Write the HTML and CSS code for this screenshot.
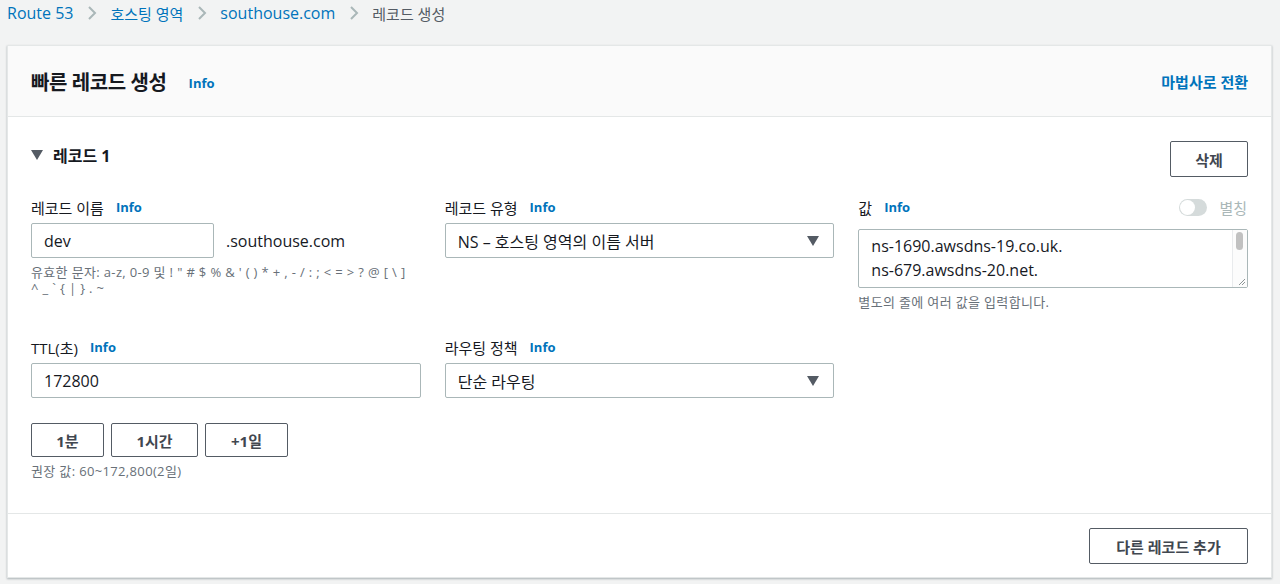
FILE: index.html
```html
<!DOCTYPE html>
<html lang="ko">
<head>
<meta charset="utf-8">
<title>레코드 생성</title>
<link rel="stylesheet" href="styles.css">
</head>
<body>
<nav class="breadcrumbs">
  <a class="crumb-link">Route 53</a>
  <span class="chev"><svg width="10" height="16" viewBox="0 0 10 16"><path d="M2 2 L8 8 L2 14" fill="none" stroke="#aab7b8" stroke-width="2"/></svg></span>
  <a class="crumb-link crumb-ko">호스팅 영역</a>
  <span class="chev"><svg width="10" height="16" viewBox="0 0 10 16"><path d="M2 2 L8 8 L2 14" fill="none" stroke="#aab7b8" stroke-width="2"/></svg></span>
  <a class="crumb-link">southouse.com</a>
  <span class="chev"><svg width="10" height="16" viewBox="0 0 10 16"><path d="M2 2 L8 8 L2 14" fill="none" stroke="#aab7b8" stroke-width="2"/></svg></span>
  <span class="crumb-current crumb-ko">레코드 생성</span>
</nav>

<section class="card">
  <header class="card-header">
    <div class="title-wrap">
      <h1 class="card-title">빠른 레코드 생성</h1>
      <a class="info info-title">Info</a>
    </div>
    <a class="wizard-link">마법사로 전환</a>
  </header>

  <div class="card-body">
    <div class="record-head">
      <div class="expander">
        <svg class="caret" width="12" height="10" viewBox="0 0 12 10"><path d="M0 0 H12 L6 10 Z" fill="#545b64"/></svg>
        <span class="record-title">레코드 1</span>
      </div>
      <button class="btn btn-delete">삭제</button>
    </div>

    <div class="grid">
      <div class="field">
        <div class="label-row"><span class="label">레코드 이름</span><a class="info">Info</a></div>
        <div class="name-row">
          <input class="input input-name" value="dev">
          <span class="suffix">.southouse.com</span>
        </div>
        <p class="hint hint-name">유효한 문자: a-z, 0-9 및 ! " # $ % &amp; ' ( ) * + , - / : ; &lt; = &gt; ? @ [ \ ]<br>^ _ ` { | } . ~</p>
      </div>

      <div class="field">
        <div class="label-row"><span class="label">레코드 유형</span><a class="info">Info</a></div>
        <div class="select">
          <span class="select-text">NS – 호스팅 영역의 이름 서버</span>
          <svg width="12" height="10" viewBox="0 0 12 10"><path d="M0 0 H12 L6 10 Z" fill="#545b64"/></svg>
        </div>
      </div>

      <div class="field">
        <div class="label-row label-row-value">
          <span class="label">값</span><a class="info">Info</a>
          <span class="spacer"></span>
          <span class="toggle"><span class="knob"></span></span>
          <span class="toggle-label">별칭</span>
        </div>
        <div class="textarea-wrap">
          <textarea class="textarea">ns-1690.awsdns-19.co.uk.
ns-679.awsdns-20.net.
ns-1147.awsdns-15.org.
ns-213.awsdns-26.com.</textarea>
          <div class="scrollbar"><span class="thumb"></span></div>
          <div class="resizer"><svg width="8" height="8" viewBox="0 0 8 8"><path d="M1 7 L7 1 M4 7 L7 4" stroke="#8d9596" stroke-width="1"/></svg></div>
        </div>
        <p class="hint">별도의 줄에 여러 값을 입력합니다.</p>
      </div>

      <div class="field">
        <div class="label-row"><span class="label">TTL(초)</span><a class="info">Info</a></div>
        <input class="input" value="172800">
        <div class="ttl-buttons">
          <button class="btn btn-ttl btn-1m">1분</button>
          <button class="btn btn-ttl btn-1h">1시간</button>
          <button class="btn btn-ttl btn-1d">+1일</button>
        </div>
        <p class="hint">권장 값: 60~172,800(2일)</p>
      </div>

      <div class="field">
        <div class="label-row"><span class="label">라우팅 정책</span><a class="info">Info</a></div>
        <div class="select">
          <span class="select-text">단순 라우팅</span>
          <svg width="12" height="10" viewBox="0 0 12 10"><path d="M0 0 H12 L6 10 Z" fill="#545b64"/></svg>
        </div>
      </div>
    </div>
  </div>

  <footer class="card-footer">
    <button class="btn btn-add">다른 레코드 추가</button>
  </footer>
</section>
</body>
</html>
```

FILE: styles.css
```css
* { box-sizing: border-box; }

body {
  margin: 0;
  background: #f2f3f3;
  font-family: "Open Sans", "Noto Sans CJK KR", sans-serif;
  color: #16191f;
  height: 584px;
  overflow: hidden;
}

.breadcrumbs {
  display: flex;
  align-items: center;
  height: 26px;
  padding-left: 7px;
  font-size: 16px;
}

.crumb-link { color: #0073bb; }
.crumb-current { color: #545b64; }
.crumb-ko { font-size: 15px; }

.chev {
  display: flex;
  align-items: center;
  margin: 0 13px 0 14px;
}

.card {
  margin: 19px 8px 0 7px;
  background: #fff;
  border: 1px solid #e4e7e7;
  box-shadow: 0 1px 2px rgba(0, 28, 36, 0.3);
}

.card-header {
  height: 71px;
  background: #fafafa;
  border-bottom: 1px solid #e4e7e7;
  display: flex;
  align-items: center;
  justify-content: space-between;
  padding: 0 23px;
}

.title-wrap {
  display: flex;
  align-items: center;
}

.card-title {
  margin: 0;
  font-size: 20px;
  font-weight: 700;
  color: #16191f;
  letter-spacing: -0.4px;
}

.info {
  color: #0073bb;
  font-weight: 700;
  font-size: 13px;
  margin-left: 12px;
}

.info-title { margin-left: 22px; margin-top: 4px; }

.wizard-link {
  color: #0073bb;
  font-weight: 700;
  font-size: 15px;
}

.card-body {
  padding: 24px 23px 34px;
}

.record-head {
  display: flex;
  align-items: flex-start;
  justify-content: space-between;
  height: 36px;
}

.expander {
  display: flex;
  align-items: center;
  height: 28px;
}

.caret { margin-right: 10px; }

.record-title {
  font-weight: 700;
  font-size: 16px;
}

.btn {
  font-family: inherit;
  background: #fff;
  border: 1px solid #545b64;
  border-radius: 2px;
  color: #414750;
  font-weight: 700;
  font-size: 15px;
  padding: 0;
}

.btn-delete {
  width: 78px;
  height: 36px;
}

.grid {
  display: grid;
  grid-template-columns: repeat(3, 1fr);
  column-gap: 24px;
  row-gap: 26px;
  margin-top: 19px;
}

.label-row {
  display: flex;
  align-items: center;
  height: 22px;
  margin-bottom: 5px;
}

.label {
  font-size: 15px;
  color: #16191f;
}

.label-row-value { margin-bottom: 11px; }

.spacer { flex: 1; }

.toggle {
  width: 28px;
  height: 17px;
  border-radius: 9px;
  background: #d5dbdb;
  position: relative;
  margin-right: 12px;
}

.knob {
  position: absolute;
  left: 1px;
  top: 1px;
  width: 15px;
  height: 15px;
  border-radius: 50%;
  background: #fff;
}

.toggle-label {
  color: #aab7b8;
  font-size: 15px;
  margin-right: 1px;
}

.input {
  display: block;
  width: 100%;
  height: 35px;
  border: 1px solid #aab7b8;
  border-radius: 2px;
  padding: 0 12px;
  font-family: inherit;
  font-size: 16px;
  color: #16191f;
  background: #fff;
}

.name-row {
  display: flex;
  align-items: center;
}

.input-name { width: 183px; }

.suffix {
  font-size: 16px;
  margin-left: 12px;
}

.hint {
  margin: 6px 0 0;
  font-size: 13px;
  line-height: 16px;
  color: #687078;
  letter-spacing: 0.35px;
}

.select {
  display: flex;
  align-items: center;
  justify-content: space-between;
  height: 35px;
  border: 1px solid #aab7b8;
  border-radius: 2px;
  padding: 0 14px 0 12px;
  font-size: 16px;
}

.textarea-wrap {
  position: relative;
  height: 59px;
}

.textarea {
  display: block;
  width: 100%;
  height: 59px;
  border: 1px solid #aab7b8;
  border-radius: 2px;
  padding: 4px 12px;
  font-family: inherit;
  font-size: 16px;
  line-height: 24px;
  color: #16191f;
  overflow: hidden;
  resize: none;
}

.scrollbar {
  position: absolute;
  top: 1px;
  right: 1px;
  bottom: 16px;
  width: 15px;
  border-left: 1px solid #e9ebed;
  background: #fcfcfc;
  display: flex;
  justify-content: center;
  padding-top: 2px;
}

.thumb {
  width: 7px;
  height: 18px;
  border-radius: 4px;
  background: #c1c1c1;
}

.resizer {
  position: absolute;
  right: 1px;
  bottom: 1px;
  width: 15px;
  height: 15px;
  border-left: 1px solid #e9ebed;
  background: #fcfcfc;
  display: flex;
  align-items: flex-end;
  justify-content: flex-end;
  padding: 0 1px 1px 0;
}

.ttl-buttons {
  display: flex;
  gap: 7px;
  margin-top: 25px;
}

.btn-ttl { height: 34px; }
.btn-1m { width: 73px; }
.btn-1h { width: 87px; }
.btn-1d { width: 83px; }

.card-footer {
  border-top: 1px solid #e4e7e7;
  display: flex;
  justify-content: flex-end;
  padding: 14px 23px 13px;
}

.btn-add {
  width: 159px;
  height: 36px;
}
```
